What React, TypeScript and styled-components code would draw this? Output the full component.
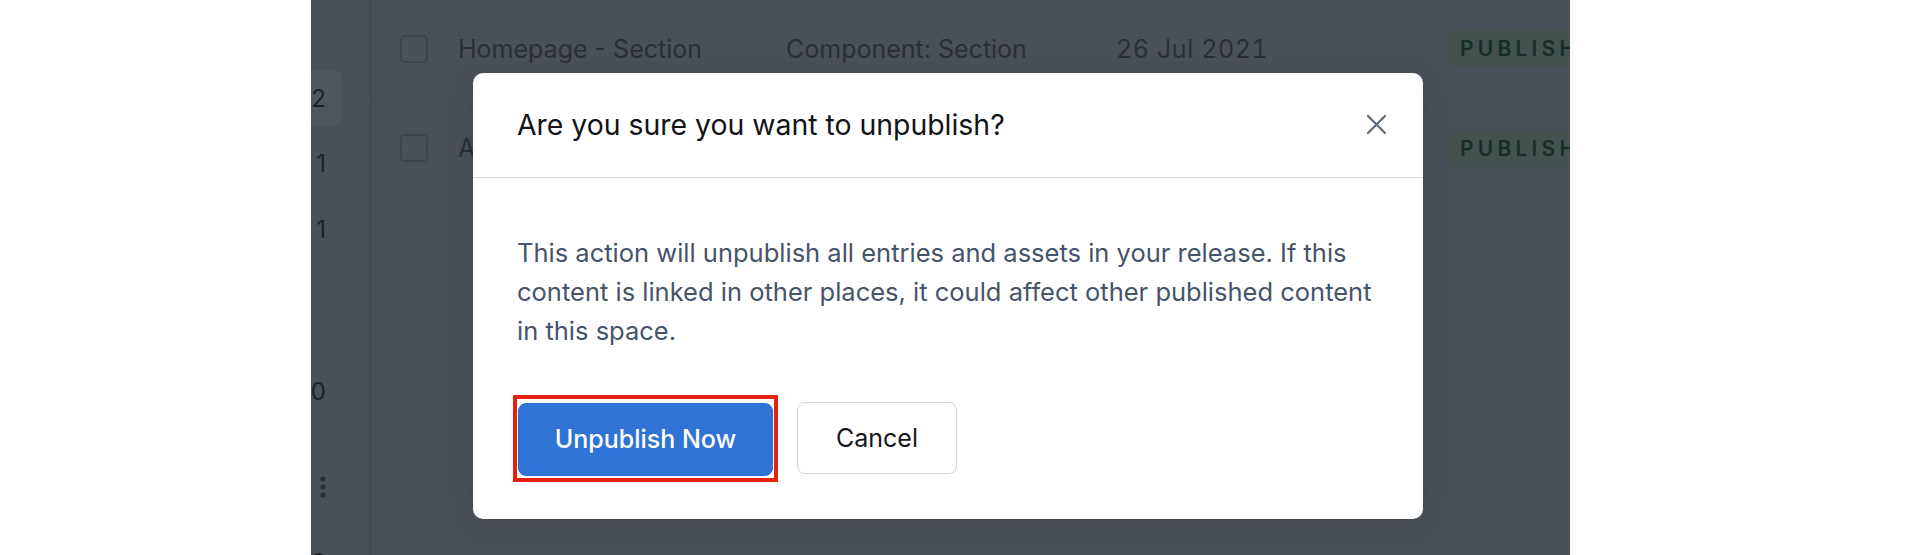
import React from "react";
import styled, { createGlobalStyle } from "styled-components";

const GlobalStyle = createGlobalStyle`
  html, body { margin: 0; padding: 0; background: #ffffff; }
  body { font-family: Inter, "Noto Sans", "Liberation Sans", sans-serif; }
  * { box-sizing: border-box; }
`;

const Page = styled.div`
  display: flex;
  width: 1920px;
  height: 555px;
  background: #ffffff;
`;

const Spacer = styled.div<{ $w: number }>`
  width: ${(p) => p.$w}px;
  flex: none;
`;

const Panel = styled.div`
  position: relative;
  width: 1259px;
  height: 555px;
  flex: none;
  overflow: hidden;
  background: #4a5057;
  display: flex;
`;

const Sidebar = styled.div`
  width: 60px;
  flex: none;
  border-right: 1px solid #42484e;
  display: flex;
  flex-direction: column;
  padding-top: 70px;
`;

const SideItem = styled.div<{ $active?: boolean; $mt?: number }>`
  height: 57px;
  margin-top: ${(p) => p.$mt ?? 0}px;
  margin-right: 28px;
  padding-right: 16px;
  display: flex;
  align-items: center;
  justify-content: flex-end;
  border-radius: 0 9px 9px 0;
  background: ${(p) => (p.$active ? "#50565d" : "transparent")};
  color: #1e2227;
  font-size: 24px;
  flex: none;
`;

const Dots = styled.div`
  margin-top: 55px;
  margin-right: 28px;
  padding-right: 16px;
  height: 24px;
  display: flex;
  justify-content: flex-end;
  align-items: center;
  flex: none;
`;

const Table = styled.div`
  flex: 1;
  display: flex;
  flex-direction: column;
`;

const Row = styled.div<{ $last?: boolean }>`
  display: grid;
  grid-template-columns: 58px 328px 330px 332px auto;
  align-items: center;
  height: ${(p) => (p.$last ? 100 : 98)}px;
  padding-left: 29px;
  border-bottom: ${(p) => (p.$last ? "none" : "1px solid #454b51")};
  color: #2a2f35;
  font-size: 25px;
  white-space: nowrap;
`;

const Check = styled.div`
  width: 28px;
  height: 28px;
  border: 2px solid #3e444a;
  border-radius: 5px;
`;

const Cell = styled.div<{ $numeric?: boolean }>`
  font-variant-numeric: ${(p) => (p.$numeric ? "tabular-nums" : "normal")};
  letter-spacing: ${(p) => (p.$numeric ? "0.6px" : "0")};
`;

const Badge = styled.div`
  justify-self: start;
  height: 37px;
  display: flex;
  align-items: center;
  padding: 0 14px 0 12px;
  border-radius: 7px;
  background: #45514e;
  color: #152e28;
  font-size: 21px;
  font-weight: 600;
  letter-spacing: 4.2px;
`;

const Overlay = styled.div`
  position: absolute;
  inset: 0;
  padding: 73px 0 0 162px;
`;

const Modal = styled.div`
  width: 950px;
  background: #ffffff;
  border-radius: 10px;
  box-shadow: 0 4px 28px rgba(0, 0, 0, 0.12);
  display: flex;
  flex-direction: column;
`;

const Header = styled.div`
  height: 104.5px;
  padding: 0 30px 0 44px;
  display: flex;
  align-items: center;
  justify-content: space-between;
  border-bottom: 1.5px solid #d6dde2;
`;

const Title = styled.h2`
  margin: 0;
  font-size: 28.4px;
  font-weight: 400;
  color: #111418;
`;

const CloseButton = styled.button`
  width: 34px;
  height: 34px;
  border: none;
  background: transparent;
  padding: 0;
  display: flex;
  align-items: center;
  justify-content: center;
  cursor: pointer;
`;

const Body = styled.p`
  margin: 0;
  padding: 55px 40px 0 44px;
  font-size: 25.5px;
  line-height: 39px;
  color: #46546a;
`;

const Footer = styled.div`
  display: flex;
  align-items: center;
  padding: 45px 44px 37px;
  gap: 19px;
`;

const Highlight = styled.div`
  margin-left: -4px;
  border: 4px solid #e8200f;
  padding: 4px 1px 2px 1px;
  display: flex;
`;

const Button = styled.button<{ $primary?: boolean }>`
  height: ${(p) => (p.$primary ? 73 : 72)}px;
  width: ${(p) => (p.$primary ? 255 : 160)}px;
  border-radius: 8px;
  font-family: Inter, "Noto Sans", "Liberation Sans", sans-serif;
  font-size: 25px;
  font-weight: ${(p) => (p.$primary ? 500 : 400)};
  border: 1.5px solid ${(p) => (p.$primary ? "#2a6fcf" : "#cdd6dc")};
  background: ${(p) => (p.$primary ? "#2f74d4" : "#ffffff")};
  color: ${(p) => (p.$primary ? "#ffffff" : "#15181c")};
  cursor: pointer;
`;

const rows = [
  { name: "Homepage - Section", type: "Component: Section", date: "26 Jul 2021" },
  { name: "About - Section", type: "Component: Section", date: "26 Jul 2021" },
];

export default function App() {
  return (
    <>
      <GlobalStyle />
      <Page>
        <Spacer $w={311} />
        <Panel>
          <Sidebar>
            <SideItem $active>2</SideItem>
            <SideItem $mt={8}>1</SideItem>
            <SideItem $mt={9}>1</SideItem>
            <SideItem $mt={105}>0</SideItem>
            <Dots>
              <svg width="6" height="22" viewBox="0 0 6 22">
                <circle cx="3" cy="3" r="2.6" fill="#2a2f35" />
                <circle cx="3" cy="11" r="2.6" fill="#2a2f35" />
                <circle cx="3" cy="19" r="2.6" fill="#2a2f35" />
              </svg>
            </Dots>
            <SideItem $mt={35}>2</SideItem>
          </Sidebar>
          <Table>
            {rows.map((r, i) => (
              <Row key={i} $last={i === rows.length - 1}>
                <Check />
                <Cell>{r.name}</Cell>
                <Cell>{r.type}</Cell>
                <Cell $numeric>{r.date}</Cell>
                <Badge>PUBLISHED</Badge>
              </Row>
            ))}
          </Table>
          <Overlay>
            <Modal role="dialog" aria-modal="true">
              <Header>
                <Title>Are you sure you want to unpublish?</Title>
                <CloseButton aria-label="Close">
                  <svg width="21" height="21" viewBox="0 0 21 21">
                    <path d="M2 2 L19 19 M19 2 L2 19" stroke="#5d677a" strokeWidth="2.2" strokeLinecap="round" />
                  </svg>
                </CloseButton>
              </Header>
              <Body>
                This action will unpublish all entries and assets in your release. If this content is linked in
                other places, it could affect other published content in this space.
              </Body>
              <Footer>
                <Highlight>
                  <Button $primary>Unpublish Now</Button>
                </Highlight>
                <Button>Cancel</Button>
              </Footer>
            </Modal>
          </Overlay>
        </Panel>
        <Spacer $w={350} />
      </Page>
    </>
  );
}
